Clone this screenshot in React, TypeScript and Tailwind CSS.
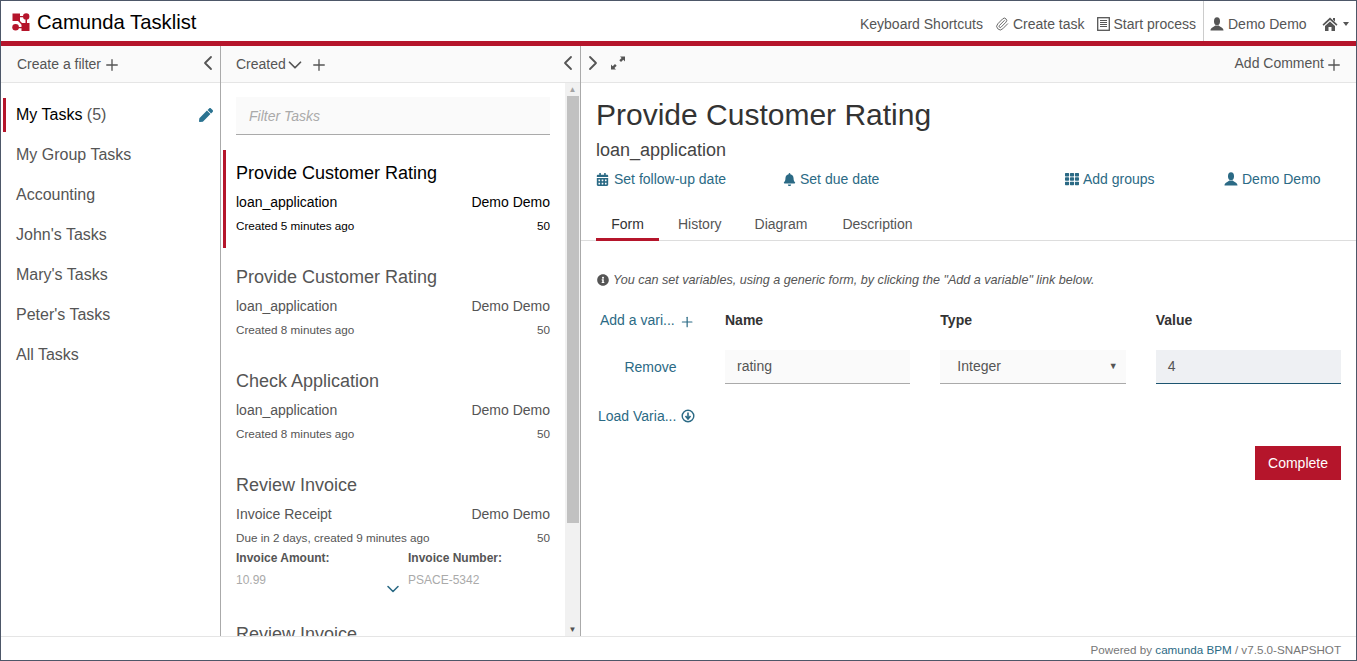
import { ChevronLeft, ChevronRight, ChevronDown, Plus, Paperclip } from "lucide-react";
import { FaBell, FaCalendarAlt, FaInfoCircle, FaTh, FaPen } from "react-icons/fa";

const font = { fontFamily: '"Liberation Sans", Arial, sans-serif' };

const filters = ["My Group Tasks", "Accounting", "John's Tasks", "Mary's Tasks", "Peter's Tasks", "All Tasks"];

const tasks = [
  { name: "Provide Customer Rating", process: "loan_application", created: "Created 8 minutes ago" },
  { name: "Check Application", process: "loan_application", created: "Created 8 minutes ago" },
];

const Logo = () => (
  <svg width="18" height="18" viewBox="0 0 18 18" className="shrink-0">
    <g fill="#b5152b">
      <rect x="0.5" y="0.5" width="7.5" height="7.5" />
      <circle cx="14.2" cy="3.4" r="3.2" />
      <circle cx="3.6" cy="14.2" r="3.3" />
      <rect x="9.5" y="10" width="8" height="8" />
      <path d="M7 7 L11 11 L10 12 L6 8 Z M8 3 H11 V4.2 H8 Z M13.5 6 H15 V10 H13.5 Z M6 14 H10 V15.2 H6 Z" />
    </g>
  </svg>
);

// glyphicon style person
const UserIcon = ({ size = 14 }: { size?: number }) => (
  <svg width={size} height={size} viewBox="0 0 14 14" fill="currentColor" className="shrink-0">
    <ellipse cx="7" cy="4.2" rx="3" ry="3.9" />
    <path d="M0.5 13.5C0.5 10.6 4 10.4 5.3 8.6h3.4C10 10.4 13.5 10.6 13.5 13.5Z" />
  </svg>
);

const HomeIcon = () => (
  <svg width="16" height="16" viewBox="0 0 16 16" fill="currentColor" className="shrink-0">
    <path d="M8 1.5 15.5 8.5 14.4 9.7 8 3.9 1.6 9.7 0.5 8.5ZM3 10 8 5.4 13 10V15H9.5V11H6.5V15H3ZM11 2H13V5.6L11 3.8Z" />
  </svg>
);

const ListIcon = () => (
  <svg width="13" height="14" viewBox="0 0 13 14" className="shrink-0">
    <rect x="0.7" y="0.7" width="11.6" height="12.6" fill="none" stroke="currentColor" strokeWidth="1.3" />
    <path d="M3 3.5h7M3 5.5h7M3 7.5h7M3 9.5h7" stroke="currentColor" strokeWidth="1.1" />
  </svg>
);

const ExpandIcon = () => (
  <svg width="14" height="14" viewBox="0 0 14 14" fill="currentColor">
    <path d="M9 0.5H14V5.5L12.3 3.8 10 6 8.3 4.2 10.6 2.1ZM0 8.5 1.7 10.2 4 8 5.7 9.8 3.4 11.9 5 13.5H0Z" />
  </svg>
);

const Meta = ({ process, created, dark }: { process: string; created: string; dark?: boolean }) => (
  <>
    <div className={`flex justify-between text-[14px] leading-[20px] mt-[7px] ${dark ? "text-black" : "text-[#555]"}`}>
      <span>{process}</span>
      <span>Demo Demo</span>
    </div>
    <div className={`flex justify-between text-[11.7px] leading-[16px] mt-[6px] ${dark ? "text-black" : "text-[#555]"}`}>
      <span>{created}</span>
      <span>50</span>
    </div>
  </>
);

export default function App() {
  return (
    <div style={font} className="h-[661px] w-[1357px] overflow-hidden border border-[#4d5768] bg-white flex flex-col text-[#444]">
      {/* header */}
      <header className="h-[40px] shrink-0 flex items-center justify-between bg-white">
        <div className="flex items-center pl-[11px] pt-[2px]">
          <Logo />
          <span className="ml-[7px] text-[20.25px] text-black">Camunda Tasklist</span>
        </div>
        <div className="flex items-stretch h-full text-[14px] text-[#555]">
          <div className="flex items-center gap-[12px] pr-[7px] pt-[6px]">
            <span>Keyboard Shortcuts</span>
            <span className="flex items-center gap-[4px]"><Paperclip size={14} strokeWidth={1.5} />Create task</span>
            <span className="flex items-center gap-[4px]"><ListIcon />Start process</span>
          </div>
          <div className="flex items-center border-l border-[#ccc] pl-[6px] pt-[6px] gap-[4px] w-[119px]">
            <UserIcon />Demo Demo
          </div>
          <div className="flex items-center gap-[5px] w-[34px] pt-[6px]">
            <HomeIcon />
            <span className="w-0 h-0 border-x-[3.5px] border-x-transparent border-t-[4px] border-t-[#555]" />
          </div>
        </div>
      </header>
      <div className="h-[5px] shrink-0 bg-[#b5152b]" />

      <div className="flex flex-1 min-h-0">
        {/* filters */}
        <aside className="w-[220px] shrink-0 border-r border-[#aaa] flex flex-col">
          <div className="h-[37px] shrink-0 bg-[#fafafa] border-b border-[#e5e5e5] flex items-center justify-between pl-[16px] text-[14px] text-[#555]">
            <span className="flex items-center gap-[2px]">Create a filter <Plus size={18} strokeWidth={1.8} className="mt-[2px]" /></span>
            <ChevronLeft size={24} strokeWidth={1.8} className="-mt-[2px]" />
          </div>
          <ul className="pt-[12px] text-[16px] text-[#555]">
            <li className="h-[40px] flex items-center">
              <div className="ml-[2px] h-[34px] flex-1 pl-[10px] pr-[7px] border-l-[3px] border-[#b5152b] flex items-center justify-between">
                <span><span className="text-black">My Tasks</span> (5)</span>
                <FaPen size={14} className="text-[#2b7391]" />
              </div>
            </li>
            {filters.map((f) => (
              <li key={f} className="h-[40px] pl-[15px] flex items-center">{f}</li>
            ))}
          </ul>
        </aside>

        {/* task list */}
        <section className="w-[360px] shrink-0 border-r border-[#aaa] flex flex-col min-h-0">
          <div className="h-[37px] shrink-0 bg-[#fafafa] border-b border-[#e5e5e5] flex items-center justify-between pl-[15px] text-[14px] text-[#555]">
            <span className="flex items-center">
              Created
              <ChevronDown size={22} strokeWidth={1.9} className="-ml-[2px] mt-[1px]" />
              <Plus size={18} strokeWidth={1.8} className="ml-[4px] mt-[2px]" />
            </span>
            <ChevronLeft size={24} strokeWidth={1.8} className="-mt-[2px]" />
          </div>
          <div className="flex flex-1 min-h-0">
            <div className="flex-1 min-w-0 overflow-hidden pt-[14px]">
              <div className="mx-[15px] h-[38px] bg-[#fafafa] border-b border-[#aaa] flex items-center px-[13px] pt-[2px] text-[14px] italic text-[#aaa]">Filter Tasks</div>
              <div className="mt-[15px] ml-[2px] h-[98px] mb-[6px] border-l-[3px] border-[#b5152b] pl-[10px] pr-[15px] pt-[11px]">
                <div className="text-[18px] leading-[24px] text-black">Provide Customer Rating</div>
                <Meta process="loan_application" created="Created 5 minutes ago" dark />
              </div>
              {tasks.map((t) => (
                <div key={t.created + t.name} className="h-[104px] px-[15px] pt-[11px]">
                  <div className="text-[18px] leading-[24px] text-[#555]">{t.name}</div>
                  <Meta process={t.process} created={t.created} />
                </div>
              ))}
              <div className="px-[15px] pt-[11px] relative">
                <div className="text-[18px] leading-[24px] text-[#555]">Review Invoice</div>
                <Meta process="Invoice Receipt" created="Due in 2 days, created 9 minutes ago" />
                <div className="grid grid-cols-[172px_1fr] text-[12px] mt-[3px]">
                  <div>
                    <div className="font-bold leading-[18px] text-[#555]">Invoice Amount:</div>
                    <div className="mt-[4px] leading-[18px] text-[#aaa]">10.99</div>
                  </div>
                  <div>
                    <div className="font-bold leading-[18px] text-[#555]">Invoice Number:</div>
                    <div className="mt-[4px] leading-[18px] text-[#aaa]">PSACE-5342</div>
                  </div>
                </div>
                <ChevronDown size={20} strokeWidth={1.9} className="absolute left-[162px] top-[117px] text-[#2b6a85]" />
              </div>
              <div className="px-[15px] mt-[33px] text-[18px] leading-[24px] text-[#555]">Review Invoice</div>
            </div>
            {/* scrollbar */}
            <div className="w-[15px] shrink-0 bg-[#f1f1f1] flex flex-col items-center">
              <div className="h-[13px] text-[#a3a3a3] text-[8px] leading-[13px]">▲</div>
              <div className="h-[427px] w-[12px] bg-[#c1c1c1]" />
              <div className="flex-1" />
              <div className="h-[13px] text-[#505050] text-[8px] leading-[13px]">▼</div>
            </div>
          </div>
        </section>

        {/* task detail */}
        <main className="flex-1 min-w-0 flex flex-col">
          <div className="h-[37px] shrink-0 bg-[#fafafa] border-b border-[#e5e5e5] flex items-center justify-between pr-[13px] text-[14px] text-[#555]">
            <span className="flex items-center gap-[6px] -mt-[2px]">
              <ChevronRight size={24} strokeWidth={1.8} />
              <ExpandIcon />
            </span>
            <span className="flex items-center gap-[1px] -mt-[2px]">Add Comment <Plus size={18} strokeWidth={1.8} className="mt-[4px]" /></span>
          </div>

          <div className="px-[15px] pt-[14px]">
            <h1 className="text-[30px] leading-[36px] text-[#333]">Provide Customer Rating</h1>
            <div className="text-[18px] leading-[24px] mt-[5px] text-[#444]">loan_application</div>
            <div className="grid grid-cols-[187px_282px_159px_1fr] mt-[7px] text-[14px] leading-[20px] text-[#2b6a85]">
              <span className="flex items-center gap-[5px]"><FaCalendarAlt size={13} />Set follow-up date</span>
              <span className="flex items-center gap-[4px]"><FaBell size={13} />Set due date</span>
              <span className="flex items-center gap-[4px]"><FaTh size={14} />Add groups</span>
              <span className="flex items-center gap-[4px]"><UserIcon />Demo Demo</span>
            </div>
          </div>

          <nav className="mt-[18px] border-b border-[#ddd] flex px-[15px] text-[14px] text-[#555] h-[34px]">
            <span className="w-[63px] h-[34px] text-center leading-[34px] text-[#333] border-b-[3px] border-[#b5152b]">Form</span>
            <span className="ml-[19px] leading-[34px]">History</span>
            <span className="ml-[33px] leading-[34px]">Diagram</span>
            <span className="ml-[35px] leading-[34px]">Description</span>
          </nav>

          <div className="px-[15px] flex-1">
            <p className="mt-[30px] flex items-center gap-[4px] text-[12.6px] leading-[18px] italic text-[#555]">
              <FaInfoCircle size={12} className="shrink-0 ml-[1px]" />
              You can set variables, using a generic form, by clicking the "Add a variable" link below.
            </p>

            <div className="grid grid-cols-[99px_1fr_1fr_1fr] gap-x-[30px] mt-[21px] items-center text-[14px]">
              <span className="text-[#2b6a85] flex items-center gap-[4px] pl-[4px] whitespace-nowrap">Add a vari... <Plus size={18} strokeWidth={1.8} className="mt-[2px]" /></span>
              <b className="text-[#333]">Name</b>
              <b className="text-[#333]">Type</b>
              <b className="text-[#333]">Value</b>

              <span className="text-[#2b6a85] text-center pl-[10px] mt-[19px]">Remove</span>
              <div className="mt-[19px] h-[34px] bg-[#fafafa] border-b border-[#aaa] flex items-center px-[12px] text-[#555]">rating</div>
              <div className="mt-[19px] h-[34px] bg-[#fafafa] border-b border-[#aaa] flex items-center justify-between pl-[17px] pr-[8px] text-[#555]">Integer<span className="text-[9px]">▼</span></div>
              <div className="mt-[19px] h-[34px] bg-[#eef0f3] border-b border-[#1c5470] flex items-center px-[12px] text-[#555]">4</div>
            </div>

            <div className="mt-[22px] text-[14px] leading-[20px] text-[#2b6a85] flex items-center gap-[5px] pl-[2px]">
              Load Varia...
              <svg width="14" height="14" viewBox="0 0 14 14" fill="none" stroke="currentColor">
                <circle cx="7" cy="7" r="5.8" strokeWidth="1.4" />
                <path d="M7 3.5v6M4.5 7 7 10l2.5-3" strokeWidth="1.6" />
              </svg>
            </div>

            <div className="flex justify-end mt-[20px]">
              <button className="w-[86px] h-[34px] bg-[#b5152b] text-white text-[14px]">Complete</button>
            </div>
          </div>
        </main>
      </div>

      <footer className="h-[24px] shrink-0 bg-white border-t border-[#e5e5e5] flex items-center justify-end pr-[15px] pt-[2px] text-[11.65px] text-[#777]">
        Powered by&nbsp;<span className="text-[#2b6a85]">camunda BPM</span>&nbsp;/ v7.5.0-SNAPSHOT
      </footer>
    </div>
  );
}
